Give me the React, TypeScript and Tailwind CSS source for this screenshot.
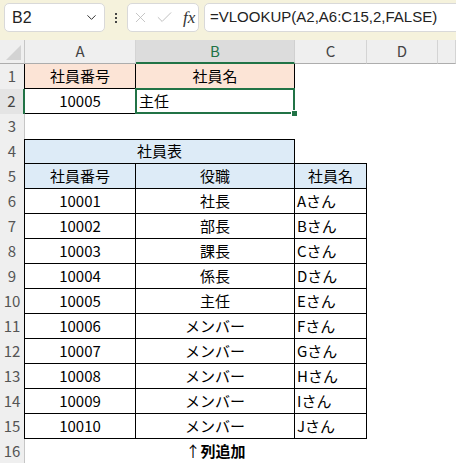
import { ChevronDown, X, Check } from 'lucide-react';

type Staff = [string, string, string];

const staff: Staff[] = [
  ['10001', '社長', 'Aさん'],
  ['10002', '部長', 'Bさん'],
  ['10003', '課長', 'Cさん'],
  ['10004', '係長', 'Dさん'],
  ['10005', '主任', 'Eさん'],
  ['10006', 'メンバー', 'Fさん'],
  ['10007', 'メンバー', 'Gさん'],
  ['10008', 'メンバー', 'Hさん'],
  ['10009', 'メンバー', 'Iさん'],
  ['10010', 'メンバー', 'Jさん'],
];

const jp = "font-['Yu_Gothic','Noto_Sans_CJK_JP',sans-serif]";

const RowHead = ({ n, active = false }: { n: number; active?: boolean }) => (
  <div
    className={
      active
        ? 'h-[25px] flex items-center justify-center bg-[#e4e4e4] border-r-2 border-[#217346] text-[15px] text-[#444]'
        : 'h-[25px] flex items-center justify-center bg-[#efefef] border-r border-[#c6c6c6] text-[15px] text-[#555]'
    }
  >
    {n}
  </div>
);

const ColHead = ({ label, active = false }: { label: string; active?: boolean }) => (
  <div
    className={
      active
        ? 'h-[24px] flex items-center justify-center bg-[#dcdcdc] border-r border-b-2 border-r-[#d0d0d0] border-b-[#217346] text-[15px] text-[#217346]'
        : 'h-[24px] flex items-center justify-center bg-[#efefef] border-r border-b border-r-[#d4d4d4] border-b-[#adadad] text-[15px] text-[#444]'
    }
  >
    {label}
  </div>
);

const Empty = () => <div className="h-[25px]" />;

export default function App() {
  return (
    <div className={`w-[456px] h-[463px] overflow-hidden bg-white ${jp}`}>
      {/* formula bar */}
      <div className="h-[40px] bg-[#f5f2dc] flex items-start pt-[3px] pl-[4px]">
        <div className="w-[101px] h-[29px] bg-white rounded-[5px] border border-[#d9d9d9] flex items-center justify-between pl-[7px] pr-[5px]">
          <span className="text-[16px] text-[#222] font-['Liberation_Sans',sans-serif]">B2</span>
          <ChevronDown size={15} strokeWidth={1.6} className="text-[#333]" />
        </div>
        <div className="w-[22px] h-[29px] flex flex-col items-center justify-center gap-[2px]">
          <span className="w-[2px] h-[2px] bg-[#444]" />
          <span className="w-[2px] h-[2px] bg-[#444]" />
          <span className="w-[2px] h-[2px] bg-[#444]" />
        </div>
        <div className="w-[72px] h-[29px] bg-white rounded-[5px] border border-[#d9d9d9] flex items-center pl-[4px] gap-[6px]">
          <X size={17} strokeWidth={1.2} className="text-[#bcbcbc]" />
          <Check size={19} strokeWidth={1.2} className="text-[#bcbcbc]" />
          <span className="ml-[3px] text-[17px] italic text-[#333] font-['Liberation_Serif',serif]">fx</span>
        </div>
        <div className="ml-[5px] flex-1 -mr-[10px] h-[29px] bg-white rounded-[5px] border border-[#d9d9d9] flex items-center pl-[5px]">
          <span className="text-[15px] text-[#222] font-['Liberation_Sans',sans-serif]">=VLOOKUP(A2,A6:C15,2,FALSE)</span>
        </div>
      </div>

      {/* sheet */}
      <div className="grid grid-cols-[25px_111px_159px_72px_71px_1fr] text-[15px] text-black">
        {/* column headers */}
        <div className="h-[24px] bg-[#efefef] border-r border-b border-r-[#c6c6c6] border-b-[#adadad] flex items-end justify-end p-[3px]">
          <svg width="15" height="15" viewBox="0 0 15 15">
            <polygon points="15,0 15,15 0,15" fill="#d3d3d3" />
          </svg>
        </div>
        <ColHead label="A" />
        <ColHead label="B" active />
        <ColHead label="C" />
        <ColHead label="D" />
        <ColHead label="" />

        {/* row 1 */}
        <RowHead n={1} />
        <div className="h-[25px] -ml-px flex items-center justify-center bg-[#fce4d6] border-l border-r border-b border-black">社員番号</div>
        <div className="h-[25px] flex items-center justify-center bg-[#fce4d6] border-r border-b border-black">社員名</div>
        <Empty />
        <Empty />
        <Empty />

        {/* row 2 */}
        <RowHead n={2} active />
        <div className="h-[25px] flex items-center justify-center border-r border-b border-black">10005</div>
        <div className="relative h-[25px] flex items-center pl-[3px] border-r border-b border-black">
          主任
          <div className="absolute -left-px -top-px -right-px -bottom-px border-2 border-[#217346]" />
          <div className="absolute -right-[4px] -bottom-[4px] w-[7px] h-[7px] bg-[#217346] border border-white" />
        </div>
        <Empty />
        <Empty />
        <Empty />

        {/* row 3 */}
        <RowHead n={3} />
        <Empty />
        <Empty />
        <Empty />
        <Empty />
        <Empty />

        {/* row 4 */}
        <RowHead n={4} />
        <div className="col-span-2 h-[25px] -ml-px flex items-center justify-center bg-[#ddebf7] border border-black">社員表</div>
        <div className="h-[25px] border-b border-black" />
        <Empty />
        <Empty />

        {/* row 5 */}
        <RowHead n={5} />
        <div className="h-[25px] -ml-px flex items-center justify-center bg-[#ddebf7] border-l border-r border-b border-black">社員番号</div>
        <div className="h-[25px] flex items-center justify-center bg-[#ddebf7] border-r border-b border-black">役職</div>
        <div className="h-[25px] flex items-center justify-center bg-[#ddebf7] border-r border-b border-black">社員名</div>
        <Empty />
        <Empty />

        {/* rows 6-15 */}
        {staff.map(([id, role, name], i) => (
          <div key={id} className="contents">
            <RowHead n={i + 6} />
            <div className="h-[25px] -ml-px flex items-center justify-center border-l border-r border-b border-black">{id}</div>
            <div className="h-[25px] flex items-center justify-center border-r border-b border-black">{role}</div>
            <div className="h-[25px] flex items-center pl-[2px] border-r border-b border-black">{name}</div>
            <Empty />
            <Empty />
          </div>
        ))}

        {/* row 16 */}
        <RowHead n={16} />
        <Empty />
        <div className="h-[25px] flex items-center justify-center">
          <span className="font-normal">↑</span>
          <span className="font-bold">列追加</span>
        </div>
        <Empty />
        <Empty />
        <Empty />
      </div>
    </div>
  );
}
